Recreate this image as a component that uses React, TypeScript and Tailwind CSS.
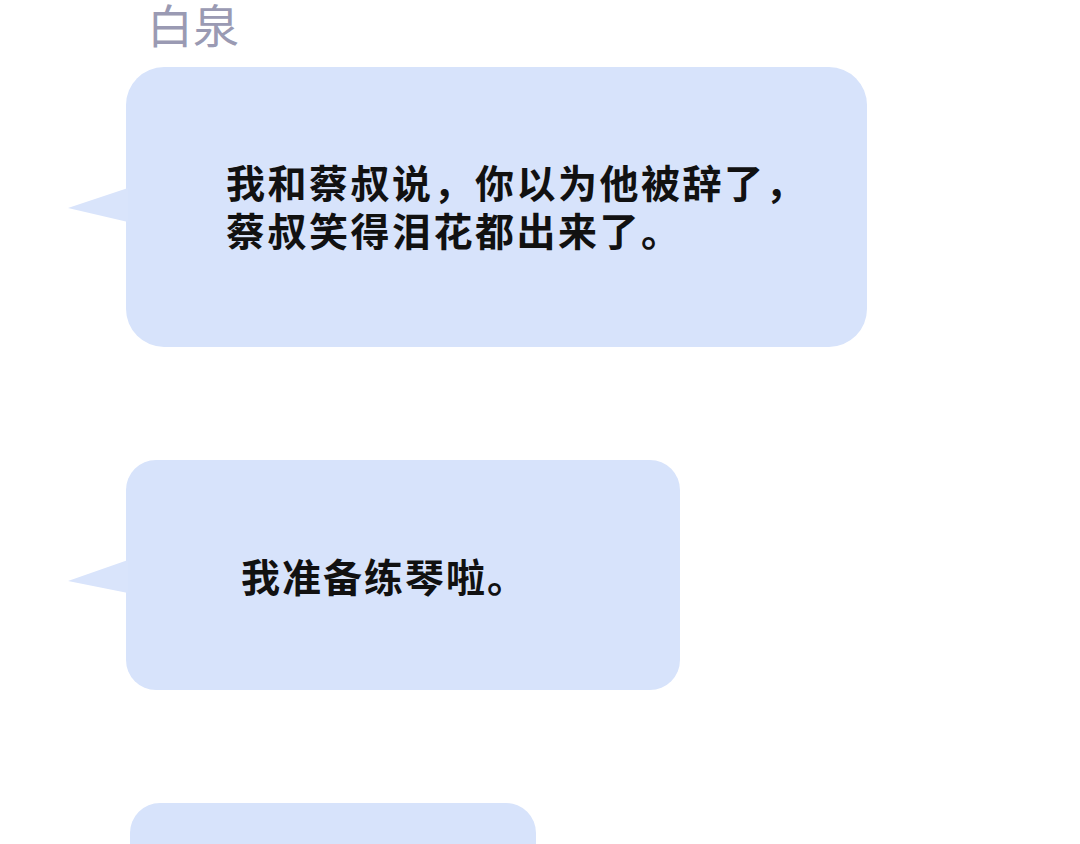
import React from "react";

const cjk = { fontFamily: '"Noto Sans CJK SC", "Noto Sans", sans-serif' };

function Tail({ top, height, tipY }: { top: number; height: number; tipY: number }) {
  return (
    <svg
      className="absolute"
      style={{ left: -58, top }}
      width={60}
      height={height}
      viewBox={`0 0 60 ${height}`}
    >
      <polygon points={`0,${tipY} 60,0 60,${height}`} fill="#d9e4fb" />
    </svg>
  );
}

export default function App() {
  return (
    <div className="w-[1080px] h-[844px] overflow-hidden bg-white" style={cjk}>
      <div className="ml-[147px] text-[46px] leading-[46px] text-[#9a9ab3] font-normal">白泉</div>

      <div className="relative ml-[126px] mt-[21px] w-[741px] h-[280px] rounded-[38px] bg-[#d7e3fb] flex items-center pl-[100px] pb-[4px]">
        <Tail top={121} height={34} tipY={20} />
        <div className="text-[39px] leading-[48px] font-bold text-[#111] tracking-[2.5px]">
          <div>我和蔡叔说，你以为他被辞了，</div>
          <div>蔡叔笑得泪花都出来了。</div>
        </div>
      </div>

      <div className="relative ml-[126px] mt-[113px] w-[554px] h-[230px] rounded-[30px] bg-[#d7e3fb] flex items-center pl-[115px]">
        <Tail top={100} height={33} tipY={21} />
        <div className="text-[39px] leading-[48px] font-bold text-[#111] tracking-[2px]">我准备练琴啦。</div>
      </div>

      <div className="relative ml-[130px] mt-[113px] w-[406px] h-[200px] rounded-[30px] bg-[#d7e3fb]" />
    </div>
  );
}
